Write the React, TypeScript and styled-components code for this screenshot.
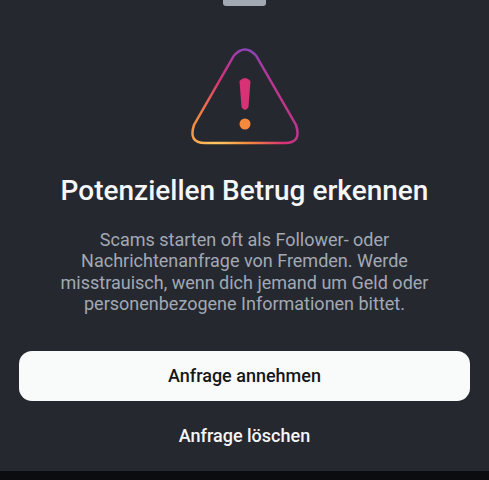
import React from "react";
import styled, { createGlobalStyle } from "styled-components";

const GlobalStyle = createGlobalStyle`
  body { margin: 0; background: #262830; }
  * { box-sizing: border-box; }
`;

const Sheet = styled.main`
  width: 489px;
  height: 480px;
  display: flex;
  flex-direction: column;
  align-items: center;
  background: #262830;
  font-family: Roboto, sans-serif;
  overflow: hidden;
`;

const Handle = styled.div`
  width: 43px;
  height: 6px;
  flex: none;
  border-radius: 0 0 3px 3px;
  background: #a2a9b3;
`;

const WarningIcon = styled.svg`
  width: 120px;
  height: 106px;
  flex: none;
  margin-top: 36px;
`;

const Title = styled.h1`
  margin: 25px 0 0;
  font-size: 28px;
  line-height: 36px;
  font-weight: 500;
  color: #f5f6f8;
  white-space: nowrap;
`;

const Description = styled.p`
  margin: 20px 0 0;
  font-size: 18px;
  line-height: 21.3px;
  color: #a2a9b4;
  text-align: center;
  white-space: nowrap;
`;

const Actions = styled.div`
  width: 451px;
  margin-top: 37px;
  display: flex;
  flex-direction: column;
  gap: 11px;
`;

const Button = styled.button<{ $primary?: boolean }>`
  height: ${(p) => (p.$primary ? 50 : 48)}px;
  padding: 0;
  border: 0;
  border-radius: 13px;
  background: ${(p) => (p.$primary ? "#f9fbfa" : "transparent")};
  color: ${(p) => (p.$primary ? "#14171a" : "#f5f6f8")};
  font: 500 18px/24px Roboto, sans-serif;
`;

const BottomBar = styled.div`
  width: 100%;
  height: 9px;
  flex: none;
  margin-top: auto;
  background: #0b0c10;
`;

export default function App() {
  return (
    <>
      <GlobalStyle />
      <Sheet>
        <Handle />
        <WarningIcon viewBox="185 42 120 106" fill="none" aria-hidden="true">
          <defs>
            <radialGradient id="glow" gradientUnits="userSpaceOnUse" cx="215" cy="150" r="115">
              <stop offset="0" stopColor="#ffd36a" />
              <stop offset="0.3" stopColor="#f58a3c" />
              <stop offset="0.6" stopColor="#d93175" />
              <stop offset="0.85" stopColor="#a53aa5" />
              <stop offset="1" stopColor="#6a50c8" />
            </radialGradient>
          </defs>
          <path d="M234 55.5Q245 43.5 256 55.5L296 125Q302 143 285 143H205Q188 143 194 125Z" stroke="url(#glow)" strokeWidth="2.5" />
          <path d="M239.5 81Q245 75 250.5 81L248.5 107Q245 113 241.5 107Z" fill="#d93175" />
          <circle cx="245" cy="124" r="5.5" fill="#f58a3c" />
        </WarningIcon>
        <Title>Potenziellen Betrug erkennen</Title>
        <Description>
          Scams starten oft als Follower- oder<br />
          Nachrichtenanfrage von Fremden. Werde<br />
          misstrauisch, wenn dich jemand um Geld oder<br />
          personenbezogene Informationen bittet.
        </Description>
        <Actions>
          <Button $primary>Anfrage annehmen</Button>
          <Button>Anfrage löschen</Button>
        </Actions>
        <BottomBar />
      </Sheet>
    </>
  );
}
